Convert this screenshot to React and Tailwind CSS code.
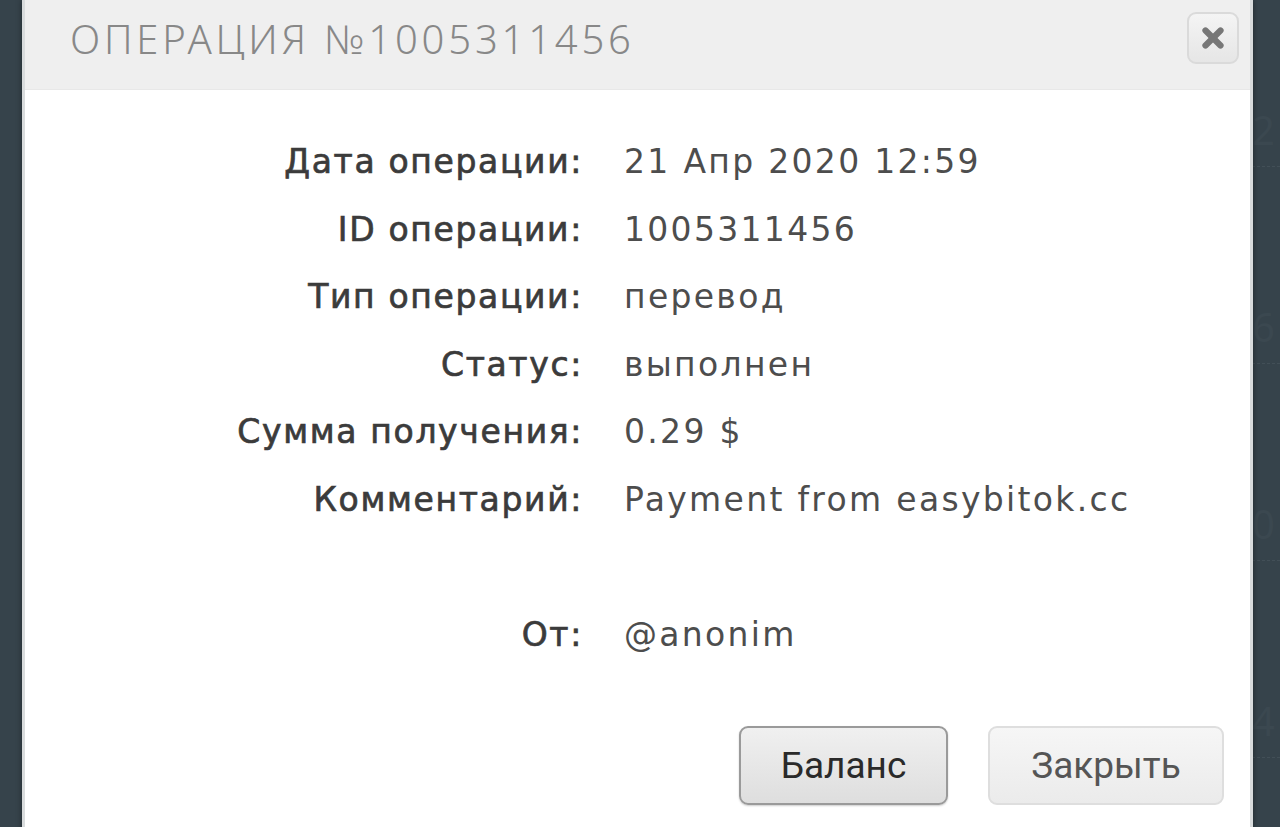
import { X } from "lucide-react";

const rows = [
  ["Дата операции:", "21 Апр 2020 12:59"],
  ["ID операции:", "1005311456"],
  ["Тип операции:", "перевод"],
  ["Статус:", "выполнен"],
  ["Сумма получения:", "0.29 $"],
  ["Комментарий:", "Payment from easybitok.cc"],
  ["", ""],
  ["От:", "@anonim"],
];

export default function App() {
  return (
    <div className="relative h-[827px] w-[1280px] overflow-hidden bg-[#36434b]">
      {/* page behind the modal */}
      <div className="absolute right-0 top-[100px] flex w-[28px] flex-col text-[40px] leading-[60px] text-[#3b4850]" style={{ fontFamily: "'Noto Sans', sans-serif" }}>
        <span className="border-b border-dashed border-[#424f57] pb-[6px]">2</span>
        <span className="mt-[130px] border-b border-dashed border-[#424f57] pb-[6px]">6</span>
        <span className="mt-[130px] border-b border-dashed border-[#424f57] pb-[6px]">0</span>
        <span className="mt-[130px] border-b border-dashed border-[#424f57] pb-[6px]">4</span>
      </div>

      <div className="absolute left-[22px] top-0 h-[900px] w-[1231px] border-x-[3px] border-[#d9dcdd] bg-white shadow-[0_0_6px_rgba(0,0,0,0.4)]">
        <div className="flex h-[90px] items-center justify-between border-b border-[#e8e8e8] bg-[#efefef] pl-[45px] pr-[11px]">
          <h1
            className="mb-[12px] text-[40px] font-light tracking-[0.095em] text-[#888888]"
            style={{ fontFamily: "'Noto Sans', sans-serif" }}
          >
            ОПЕРАЦИЯ №1005311456
          </h1>
          <button className="mb-[14px] flex h-[52px] w-[52px] items-center justify-center rounded-[9px] border-2 border-[#dadada] bg-gradient-to-b from-[#f4f4f4] to-[#e6e6e6]">
            <X className="h-[30px] w-[30px] text-[#777777]" strokeWidth={5} />
          </button>
        </div>

        <div
          className="grid grid-cols-[558px_1fr] gap-x-[41px] pt-[38px]"
          style={{ fontFamily: "'DejaVu Sans', sans-serif" }}
        >
          {rows.map(([label, value], i) => (
            <div key={i} className="contents">
              <div className="h-[67.5px] text-right text-[33px] leading-[67.5px] tracking-[0.05em] text-[#3b3b3b] [-webkit-text-stroke:0.7px_#3b3b3b]">{label}</div>
              <div className="h-[67.5px] text-[33px] leading-[67.5px] tracking-[0.07em] text-[#4d4d4d]">{value}</div>
            </div>
          ))}
        </div>

        <div className="mt-[58px] flex justify-end gap-[40px] pr-[26px]" style={{ fontFamily: "Roboto, sans-serif" }}>
          <button className="h-[79px] w-[209px] rounded-[9px] border-2 border-[#9a9a9a] bg-gradient-to-b from-[#f0f0f0] to-[#dedede] text-[37px] text-[#2a2a2a] shadow-[0_1px_2px_rgba(0,0,0,0.2)]">
            Баланс
          </button>
          <button className="h-[79px] w-[236px] rounded-[9px] border-2 border-[#dedede] bg-gradient-to-b from-[#f6f6f6] to-[#ebebeb] text-[37px] text-[#555555]">
            Закрыть
          </button>
        </div>
      </div>
    </div>
  );
}
